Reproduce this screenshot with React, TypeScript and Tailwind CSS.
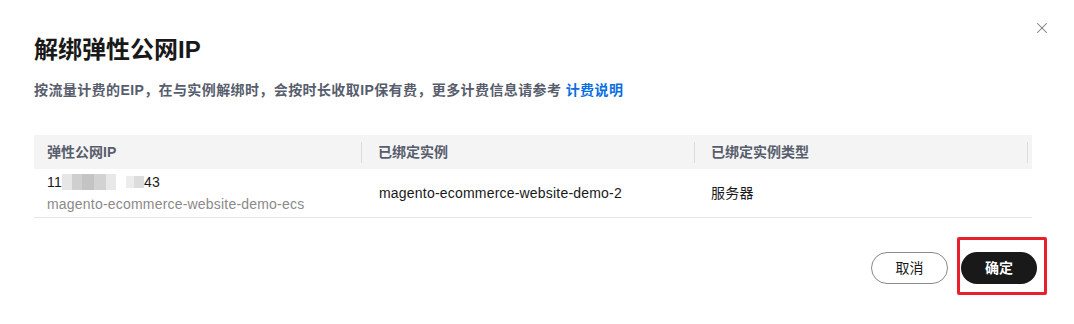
import { X } from 'lucide-react';

const font = { fontFamily: '"Liberation Sans", "Noto Sans CJK SC", sans-serif' };

export default function App() {
  return (
    <div className="w-[1074px] h-[324px] bg-white relative" style={font}>
      {/* Close */}
      <button className="absolute left-[1033px] top-[19px] text-[#7a7a7a]">
        <X size={18} strokeWidth={1.4} />
      </button>

      <div className="px-[34px] pt-[34px]">
        {/* Title */}
        <h1 className="text-[24px] leading-[32px] font-bold text-[#191919]">解绑弹性公网IP</h1>

        {/* Description */}
        <p className="mt-[14px] text-[14px] leading-[20px] font-semibold text-[#575d6c] tracking-[0.4px]">
          按流量计费的EIP，在与实例解绑时，会按时长收取IP保有费，更多计费信息请参考{' '}
          <a className="text-[#0a6fe0]">计费说明</a>
        </p>

        {/* Table */}
        <div className="mt-[35px] w-[998px]">
          <div className="grid grid-cols-[328px_333px_337px] h-[34px] bg-[#f4f4f4] text-[14px] text-[#575d6c] font-semibold">
            <div className="flex items-center pl-[13px] border-r border-[#dcdcdc] my-[7px]">弹性公网IP</div>
            <div className="flex items-center pl-[16px] border-r border-[#dcdcdc] my-[7px]">已绑定实例</div>
            <div className="flex items-center pl-[16px] border-r border-[#dcdcdc] my-[7px] mr-[4px]">已绑定实例类型</div>
          </div>
          <div className="grid grid-cols-[328px_333px_337px] h-[49px] border-b border-[#e5e5e5] text-[14px] tracking-[0.2px]">
            <div className="flex flex-col justify-center pl-[13px]">
              <div className="flex items-center h-[22px] text-[#191919]">
                <span>11</span>
                <span className="flex h-[16px] w-[54px]">
                  <span className="w-[10px] bg-[#e6e6e6]"></span>
                  <span className="w-[10px] bg-[#cfcfcf]"></span>
                  <span className="w-[12px] bg-[#c4c4c4]"></span>
                  <span className="w-[12px] bg-[#d2d2d2]"></span>
                  <span className="w-[10px] bg-[#e8e8e8]"></span>
                </span>
                <span className="w-[10px]"></span>
                <span className="flex h-[12px] w-[18px]">
                  <span className="w-[8px] bg-[#ececec]"></span>
                  <span className="w-[10px] bg-[#dcdcdc]"></span>
                </span>
                <span>43</span>
              </div>
              <div className="text-[#8a8a8a] leading-[22px]">magento-ecommerce-website-demo-ecs</div>
            </div>
            <div className="flex items-center pl-[17px] text-[#191919]">magento-ecommerce-website-demo-2</div>
            <div className="flex items-center pl-[16px] text-[#191919]">服务器</div>
          </div>
        </div>

        {/* Footer */}
        <div className="flex justify-end gap-[13px] mt-[34px] pr-[3px]">
          <button className="w-[77px] h-[32px] rounded-full border border-[#8a8a8a] text-[14px] text-[#191919]">取消</button>
          <div className="relative">
            <button className="w-[76px] h-[32px] rounded-full bg-[#191919] text-[14px] font-semibold text-white">确定</button>
            <div className="absolute left-[-4px] top-[-15px] w-[90px] h-[58px] border-[3px] border-[#e8202a] rounded-[2px]"></div>
          </div>
        </div>
      </div>
    </div>
  );
}
